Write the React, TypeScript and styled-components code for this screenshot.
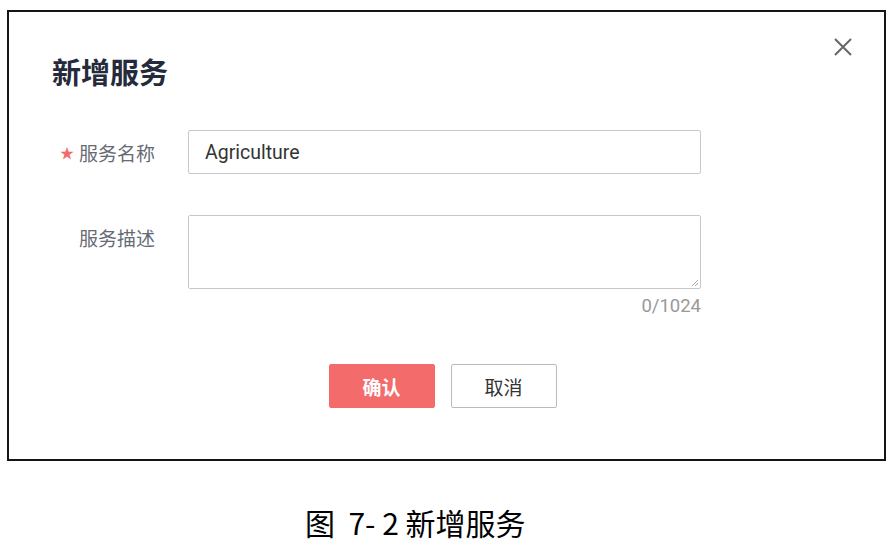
import React from 'react';
import styled, { createGlobalStyle } from 'styled-components';

const GlobalStyle = createGlobalStyle`
  body {
    margin: 0;
    background: #fff;
    font-family: 'Roboto', 'Noto Sans CJK SC', sans-serif;
  }
`;

const Page = styled.div`
  width: 893px;
  height: 544px;
  padding: 10px 0 0 7px;
  box-sizing: border-box;
  display: flex;
  flex-direction: column;
`;

const Frame = styled.div`
  width: 879px;
  height: 451px;
  box-sizing: border-box;
  border: 2px solid #151515;
  padding: 44px 0 0 43px;
  display: flex;
  flex-direction: column;
`;

const Header = styled.div`
  display: flex;
  justify-content: space-between;
  align-items: flex-start;
  padding-right: 30px;
`;

const Title = styled.h2`
  margin: 0;
  font-size: 29px;
  line-height: 30px;
  font-weight: 700;
  color: #252b3a;
  font-family: 'Noto Sans CJK SC', sans-serif;
`;

const Close = styled.button`
  border: none;
  background: none;
  padding: 0;
  margin-top: -20px;
  width: 22px;
  height: 22px;
  display: flex;
  align-items: center;
  justify-content: center;
  cursor: pointer;
`;

const Form = styled.div`
  margin-top: 44px;
  margin-left: -43px;
  display: grid;
  grid-template-columns: 146px 513px;
  column-gap: 33px;
  align-items: start;
`;

const Label = styled.label<{ $top?: number }>`
  height: 44px;
  margin-top: ${(p) => p.$top ?? 0}px;
  display: flex;
  align-items: center;
  justify-content: flex-end;
  font-size: 19px;
  color: #666a75;
  font-family: 'Noto Sans CJK SC', sans-serif;
`;

const Star = styled.span`
  color: #f26a6a;
  font-size: 14px;
  margin-right: 5px;
`;

const Input = styled.div`
  height: 44px;
  box-sizing: border-box;
  border: 1px solid #c6c8cc;
  border-radius: 2px;
  padding: 0 16px;
  display: flex;
  align-items: center;
  font-size: 19.5px;
  color: #333;
`;

const TextArea = styled.div`
  position: relative;
  height: 74px;
  box-sizing: border-box;
  border: 1px solid #c6c8cc;
  border-radius: 2px;
  margin-top: 41px;
`;

const Grip = styled.svg`
  position: absolute;
  right: 1px;
  bottom: 1px;
`;

const Counter = styled.div`
  text-align: right;
  font-size: 18.5px;
  color: #999;
  margin-top: 6px;
  line-height: 22px;
`;

const Actions = styled.div`
  grid-column: 2;
  margin-top: 47px;
  padding-right: 4px;
  display: flex;
  justify-content: center;
  gap: 16px;
`;

const Button = styled.button<{ $primary?: boolean }>`
  width: 106px;
  height: 44px;
  box-sizing: border-box;
  border-radius: 2px;
  font-size: 19px;
  font-family: 'Noto Sans CJK SC', sans-serif;
  border: 1px solid ${(p) => (p.$primary ? '#f36b6b' : '#b8bbc0')};
  background: ${(p) => (p.$primary ? '#f36b6b' : '#fff')};
  color: ${(p) => (p.$primary ? '#fff' : '#333')};
  font-weight: ${(p) => (p.$primary ? 700 : 400)};
`;

const Caption = styled.div`
  margin-top: 43px;
  padding-left: 298px;
  font-size: 30px;
  line-height: 36px;
  color: #000;
  font-family: 'Noto Sans CJK SC', sans-serif;
`;

export default function App() {
  return (
    <Page>
      <GlobalStyle />
      <Frame>
        <Header>
          <Title>新增服务</Title>
          <Close aria-label="close">
            <svg width="18" height="18" viewBox="0 0 18 18">
              <path d="M1 1L17 17M17 1L1 17" stroke="#666" strokeWidth="2" />
            </svg>
          </Close>
        </Header>
        <Form>
          <Label>
            <Star>★</Star>服务名称
          </Label>
          <Input>Agriculture</Input>
          <Label $top={41}>服务描述</Label>
          <div>
            <TextArea>
              <Grip width="10" height="10" viewBox="0 0 10 10">
                <path d="M9 3L3 9M9 6L6 9" stroke="#aaa" strokeWidth="1" />
              </Grip>
            </TextArea>
            <Counter>0/1024</Counter>
          </div>
          <Actions>
            <Button $primary>确认</Button>
            <Button>取消</Button>
          </Actions>
        </Form>
      </Frame>
      <Caption>图&nbsp;&nbsp;7-&nbsp;2 新增服务</Caption>
    </Page>
  );
}
